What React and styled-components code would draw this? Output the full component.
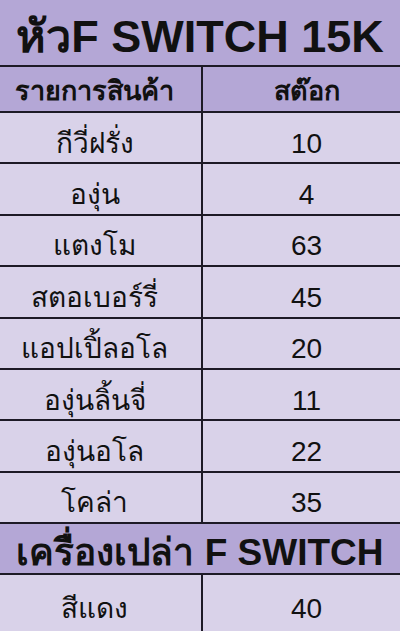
import styled, { createGlobalStyle } from "styled-components";

const GlobalStyle = createGlobalStyle`
  body {
    margin: 0;
    background: #d9d2e9;
    font-family: "Liberation Sans", Arial, "Noto Sans", sans-serif;
    color: #111;
  }
`;

const colors = {
  header: "#b4a7d6",
  row: "#d9d2e9",
  line: "#1d1a26",
};

const Sheet = styled.div`
  width: 400px;
  height: 631px;
  overflow: hidden;
  background: ${colors.row};
`;

const Banner = styled.div`
  height: ${(p) => p.$height}px;
  display: flex;
  align-items: center;
  justify-content: center;
  padding-top: ${(p) => p.$drop}px;
  background: ${colors.header};
  border-bottom: 2px solid ${colors.line};
  font-size: ${(p) => p.$size}px;
  line-height: 1.1;
  font-weight: 700;
  white-space: nowrap;
  box-sizing: border-box;
`;

const Row = styled.div`
  display: grid;
  grid-template-columns: 201px 1fr;
  grid-template-rows: 100%;
  height: ${(p) => p.$height}px;
  box-sizing: border-box;
  border-bottom: 2px solid ${colors.line};
  background: ${(p) => (p.$head ? colors.header : colors.row)};
  font-size: ${(p) => (p.$head ? 27 : 28)}px;
  line-height: 30px;
  font-weight: ${(p) => (p.$head ? 700 : 400)};
`;

const Cell = styled.div`
  display: flex;
  align-items: center;
  justify-content: center;
  min-height: 0;
  padding-top: ${(p) => (p.$drop ? 12 : 4)}px;
  padding-left: ${(p) => (p.$right ? "10px" : "0")};
  padding-right: ${(p) => (p.$right ? "0" : "12px")};
  border-left: ${(p) => (p.$right ? `2px solid ${colors.line}` : "none")};
  white-space: nowrap;
`;

const stock = [
  ["กีวี่ฝรั่ง", 10],
  ["องุ่น", 4],
  ["แตงโม", 63],
  ["สตอเบอร์รี่", 45],
  ["แอปเปิ้ลอโล", 20],
  ["องุ่นลิ้นจี่", 11],
  ["องุ่นอโล", 22],
  ["โคล่า", 35],
];

export default function App() {
  return (
    <Sheet>
      <GlobalStyle />
      <Banner $height={67} $size={45} $drop={8}>หัวF SWITCH 15K</Banner>
      <Row $head $height={46}>
        <Cell>รายการสินค้า</Cell>
        <Cell $right>สต๊อก</Cell>
      </Row>
      {stock.map(([name, qty]) => (
        <Row key={name} $height={51.4}>
          <Cell $drop>{name}</Cell>
          <Cell $drop $right>{qty}</Cell>
        </Row>
      ))}
      <Banner $height={51} $size={37} $drop={10}>เครื่องเปล่า F SWITCH</Banner>
      <Row $height={58}>
        <Cell $drop>สีแดง</Cell>
        <Cell $drop $right>40</Cell>
      </Row>
    </Sheet>
  );
}
